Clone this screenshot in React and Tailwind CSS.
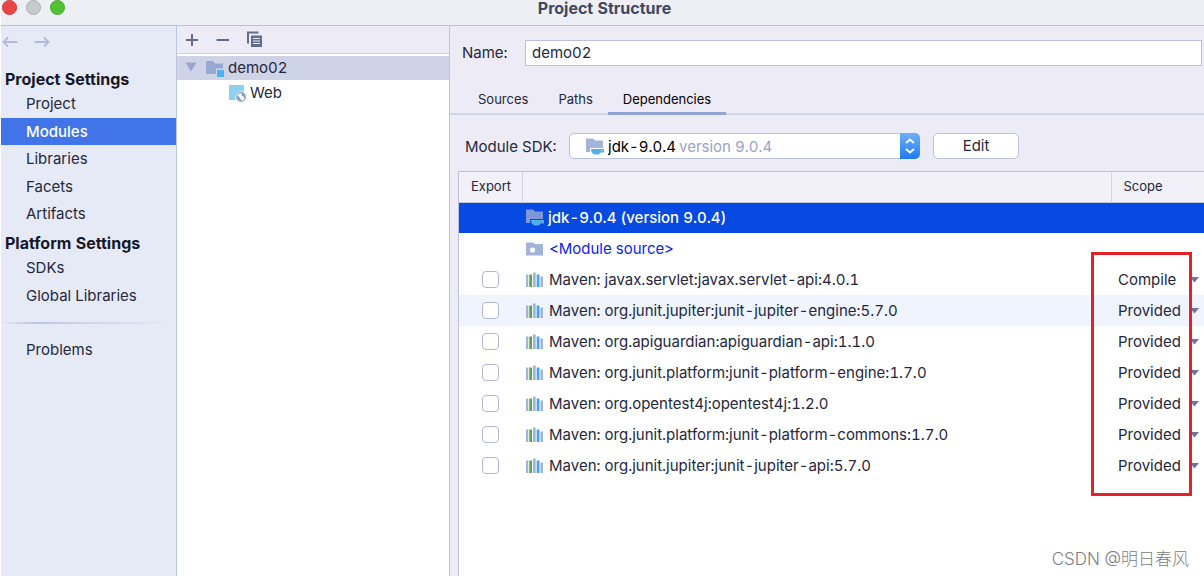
import { useState } from 'react';

const projectSettings = ['Project', 'Modules', 'Libraries', 'Facets', 'Artifacts'];
const platformSettings = ['SDKs', 'Global Libraries'];
const tabs = ['Sources', 'Paths', 'Dependencies'];

const libraries = [
    { name: 'Maven: javax.servlet:javax.servlet-api:4.0.1', scope: 'Compile' },
    { name: 'Maven: org.junit.jupiter:junit-jupiter-engine:5.7.0', scope: 'Provided' },
    { name: 'Maven: org.apiguardian:apiguardian-api:1.1.0', scope: 'Provided' },
    { name: 'Maven: org.junit.platform:junit-platform-engine:1.7.0', scope: 'Provided' },
    { name: 'Maven: org.opentest4j:opentest4j:1.2.0', scope: 'Provided' },
    { name: 'Maven: org.junit.platform:junit-platform-commons:1.7.0', scope: 'Provided' },
    { name: 'Maven: org.junit.jupiter:junit-jupiter-api:5.7.0', scope: 'Provided' },
];

function ArrowIcon({ flipped }) {
    return (
        <svg width="16" height="12" viewBox="0 0 16 12" className={flipped ? 'rotate-180' : ''}>
            <path d="M15.500 6H1.500M6 1.500L1.500 6L6 10.500" fill="none" stroke="#b3bbda" strokeWidth="1.800" />
        </svg>
    );
}

function CopyIcon() {
    return (
        <svg width="16" height="17" viewBox="0 0 16 17">
            <path d="M1 12.500V1.500H11.500" fill="none" stroke="#646c8c" strokeWidth="2" />
            <path d="M4 4.500H15V16H4Z" fill="#646c8c" />
            <path d="M6 7.500H13M6 10H13M6 12.500H13" stroke="#edebf6" strokeWidth="1.100" />
        </svg>
    );
}

function ModuleIcon() {
    return (
        <svg width="18" height="17" viewBox="0 0 18 17">
            <path d="M0 1H7L9 3.500H17V8.500H10V14H0Z" fill="#97a8d3" />
            <path d="M11 10H18V17H11Z" fill="#4fb0ec" />
        </svg>
    );
}

function WebIcon() {
    return (
        <svg width="17" height="17" viewBox="0 0 17 17">
            <path d="M0 0H15V7A6 6 0 0 0 7 15H0Z" fill="#8ed0f3" />
            <circle cx="12" cy="12" r="4.300" fill="#fff" stroke="#8b9bc8" strokeWidth="1.200" />
            <path d="M8 10.500L10.500 12L11 13.500L12.500 14.500L12 16L9 15ZM11 8L13 8.500L12.500 10.500L14 11.500L16 13V10L14 8Z" fill="#8b9bc8" />
        </svg>
    );
}

function JdkIcon({ folder }) {
    return (
        <svg width="18" height="17" viewBox="0 0 18 17">
            <path d="M0 0.500H7L9 2.500H17V10H4V14H0Z" fill={folder} />
            <path d="M5 11H18V14.500H14.500C14 16.300 12.300 16.600 10 16.600C7 16.600 5 14.500 5 11Z" fill="#4fb0ec" />
            <path d="M15 12H16.800V13.500H15Z" fill={folder} />
        </svg>
    );
}

function SourceIcon() {
    return (
        <svg width="17" height="16" viewBox="0 0 17 16">
            <path d="M0 0.500H7L9 2H17V13.500H0Z" fill="#a3b3d9" />
            <circle cx="6.500" cy="8" r="2.600" fill="#fff" />
        </svg>
    );
}

function LibraryIcon() {
    return (
        <svg width="17" height="18" viewBox="0 0 17 18">
            <path d="M0 2.500H2.300V15H0ZM7 0.500H9.700V15H7ZM14.400 4.500H17V15H14.400Z" fill="#a3b3d9" />
            <path d="M3.300 2.500H6V15H3.300Z" fill="#5ba546" />
            <path d="M10.700 2.500H13.400V15H10.700Z" fill="#3fa5ea" />
        </svg>
    );
}

function NavList({ items, active, onSelect, className }) {
    return (
        <ul className={`grid auto-rows-fr ${className}`}>
            {items.map((item) => (
                <li key={item} className="flex">
                    <button
                        onClick={() => onSelect(item)}
                        className={`flex-1 pt-px pl-[25px] text-left ${active === item ? 'bg-[#4074e8] font-medium text-white' : ''}`}
                    >
                        {item}
                    </button>
                </li>
            ))}
        </ul>
    );
}

function Sidebar() {
    const [active, setActive] = useState('Modules');

    return (
        <nav className="w-[175px] shrink-0 bg-[#e6eaf7] text-[15px]">
            <div className="flex h-[42px] items-center gap-4 pt-px pb-3 pl-px">
                <button aria-label="Back"><ArrowIcon /></button>
                <button aria-label="Forward"><ArrowIcon flipped /></button>
            </div>
            <h2 className="flex h-[22px] items-center pl-1 text-base font-bold text-[#16182a]">Project Settings</h2>
            <NavList items={projectSettings} active={active} onSelect={setActive} className="h-[138px]" />
            <h2 className="flex h-[26px] items-center pt-1 pl-1 text-base font-bold text-[#16182a]">Platform Settings</h2>
            <NavList items={platformSettings} active={active} onSelect={setActive} className="h-[55px]" />
            <hr className="mt-[13px] mr-2 h-0.5 border-0 bg-linear-to-r from-transparent via-[#bcc5e3] via-20% to-transparent" />
            <NavList items={['Problems']} active={active} onSelect={setActive} className="mt-3 h-7" />
        </nav>
    );
}

function ModuleTree() {
    return (
        <section className="w-[273px] shrink-0 border-l border-[#bcc5e0] bg-white text-[15px]">
            <div className="flex h-7 items-center gap-[15px] border-b border-[#cbd1e8] bg-[#edebf6] pl-2">
                <button aria-label="Add" className="w-4">
                    <svg width="14" height="14" viewBox="0 0 14 14">
                        <path d="M7 1V13M1 7H13" stroke="#646c8c" strokeWidth="2" />
                    </svg>
                </button>
                <button aria-label="Remove" className="w-4">
                    <svg width="14" height="14" viewBox="0 0 14 14">
                        <path d="M0.500 7H13" stroke="#646c8c" strokeWidth="2" />
                    </svg>
                </button>
                <button aria-label="Copy"><CopyIcon /></button>
            </div>
            <ul className="pt-0.5">
                <li>
                    <div className="flex h-6 items-center bg-[#ced3e8] pl-2">
                        <svg width="12" height="12" viewBox="0 0 12 12" className="mr-[9px]">
                            <path d="M0.500 0.500H11.500L6 9.500Z" fill="#9aa5cc" />
                        </svg>
                        <ModuleIcon />
                        <span className="ml-1">demo02</span>
                    </div>
                    <ul>
                        <li className="flex h-[26px] items-center pl-[52px]">
                            <WebIcon />
                            <span className="ml-1">Web</span>
                        </li>
                    </ul>
                </li>
            </ul>
        </section>
    );
}

function SdkRow() {
    return (
        <div className="flex h-[26px] items-center text-[15px]">
            <label htmlFor="sdk" className="w-[104px] shrink-0 pt-0.5">Module SDK:</label>
            <div className="relative h-full w-[351px]">
                <select id="sdk" className="size-full appearance-none rounded-[5px] border border-[#bcc2de] bg-white pt-0.5 pl-[38px] text-black">
                    <option>jdk-9.0.4</option>
                </select>
                <div className="pointer-events-none absolute inset-0 flex items-center">
                    <span className="ml-[17px]"><JdkIcon folder="#a3b3d9" /></span>
                    <span className="ml-[75px] flex-1 pt-0.5 text-[#9ba2c9]">version 9.0.4</span>
                    <span className="flex h-full w-5 items-center justify-center rounded-r-[5px] bg-linear-to-b from-[#6db0f8] to-[#1c79f2]">
                        <svg width="10" height="16" viewBox="0 0 10 16">
                            <path d="M1 5L5 1.500L9 5M1 11L5 14.500L9 11" fill="none" stroke="#fff" strokeWidth="1.800" />
                        </svg>
                    </span>
                </div>
            </div>
            <button className="ml-[13px] h-[26px] w-[86px] rounded-[5px] border border-[#bcc2de] bg-white">Edit</button>
        </div>
    );
}

function DependencyTable() {
    return (
        <div className="relative mt-3 flex-1 border-t border-l border-[#bcc2de] bg-white">
            <table className="w-full table-fixed border-collapse text-[15px]">
                <thead>
                    <tr className="h-[30px] border-b border-[#bcc5e0] bg-[#f2f0f8] text-[13px]">
                        <th className="w-[63px] border-r border-[#d3d5e6] p-0 pl-3 text-left font-normal">Export</th>
                        <th className="border-r border-[#d3d5e6]" aria-label="Name" />
                        <th className="w-[93px] p-0 pl-3 text-left font-normal">Scope</th>
                    </tr>
                </thead>
                <tbody>
                    <tr className="h-[31px] bg-[#064ae2] font-medium text-white">
                        <td />
                        <td className="p-0 pl-1">
                            <div className="flex items-center gap-1"><JdkIcon folder="#7e97d8" />jdk-9.0.4 (version 9.0.4)</div>
                        </td>
                        <td />
                    </tr>
                    <tr className="h-[31px] text-[#0b24f0]">
                        <td />
                        <td className="p-0 pt-0.5 pl-1">
                            <div className="flex items-center gap-[6px]"><SourceIcon />&lt;Module source&gt;</div>
                        </td>
                        <td />
                    </tr>
                    {libraries.map(({ name, scope }) => (
                        <tr key={name} className="h-[31px] nth-4:bg-[#eff4fe]">
                            <td className="p-0 pl-[23px]">
                                <input
                                    type="checkbox"
                                    aria-label={`Export ${name}`}
                                    className="block size-[17px] appearance-none rounded-[4px] border border-[#b1b7d8] bg-white"
                                />
                            </td>
                            <td className="p-0 pt-0.5 pl-1">
                                <div className="flex items-center gap-[6px]"><LibraryIcon />{name}</div>
                            </td>
                            <td className="p-0 pt-0.5 pl-[7px]">
                                <div className="flex items-center">
                                    <select aria-label={`Scope of ${name}`} defaultValue={scope} className="w-[72px] appearance-none">
                                        <option>Compile</option>
                                        <option>Provided</option>
                                    </select>
                                    <svg width="9" height="8" viewBox="0 0 9 8">
                                        <path d="M0 0H9L4.500 5.500Z" fill="#6d76a0" />
                                    </svg>
                                </div>
                            </td>
                        </tr>
                    ))}
                </tbody>
            </table>
            {/* Highlight around the scope column */}
            <div className="pointer-events-none absolute top-20 right-3 h-[244px] w-[101px] border-[3px] border-[#e5202b]" />
            <p className="absolute right-[15px] bottom-1 font-['Inter','Noto_Sans_CJK_SC',sans-serif] text-[17px] font-light text-[#808080]">
                CSDN @明日春风
            </p>
        </div>
    );
}

export default function App() {
    const [tab, setTab] = useState('Dependencies');

    return (
        <div className="flex min-h-screen flex-col overflow-hidden bg-white pl-px font-['Inter',sans-serif] tabular-nums text-[#25283b]">
            <header className="relative flex h-[26px] items-start justify-center border-b border-[#bfc1c8] bg-[#eeeff4] pl-1">
                <div className="absolute top-0 left-px flex gap-[9px]">
                    <span className="size-[15px] rounded-full border border-[#d13c3c] bg-[#ea4545]" />
                    <span className="size-[15px] rounded-full border border-[#a8b0ae] bg-[#c5cccb]" />
                    <span className="size-[15px] rounded-full border border-[#43a52c] bg-[#52c234]" />
                </div>
                <h1 className="text-base leading-4 font-bold text-[#42475f]">Project Structure</h1>
            </header>
            <div className="flex flex-1">
                <Sidebar />
                <ModuleTree />
                <main className="flex min-w-0 flex-1 flex-col border-l border-[#bcc5e0] bg-[#edebf6]">
                    <div className="mt-[14px] mr-0.5 ml-3 flex h-[26px] items-center text-[15px]">
                        <label htmlFor="name" className="w-[63px] shrink-0">Name:</label>
                        <input id="name" defaultValue="demo02" className="h-full min-w-0 flex-1 border border-[#b9c1df] bg-white px-[6px] pb-0.5" />
                    </div>
                    <div role="tablist" className="mt-[17px] flex h-8 border-b-2 border-[#d0d4e8] pl-[13px] text-[13px]">
                        {tabs.map((item) => (
                            <button
                                key={item}
                                role="tab"
                                aria-selected={tab === item}
                                onClick={() => setTab(item)}
                                className={`-mb-0.5 border-b-[3px] px-[15px] pt-1 ${tab === item ? 'border-[#90a3d6] text-black' : 'border-transparent'}`}
                            >
                                {item}
                            </button>
                        ))}
                    </div>
                    <div className="mt-[18px] ml-[15px]"><SdkRow /></div>
                    <div className="ml-2 flex flex-1 flex-col"><DependencyTable /></div>
                </main>
            </div>
        </div>
    );
}
